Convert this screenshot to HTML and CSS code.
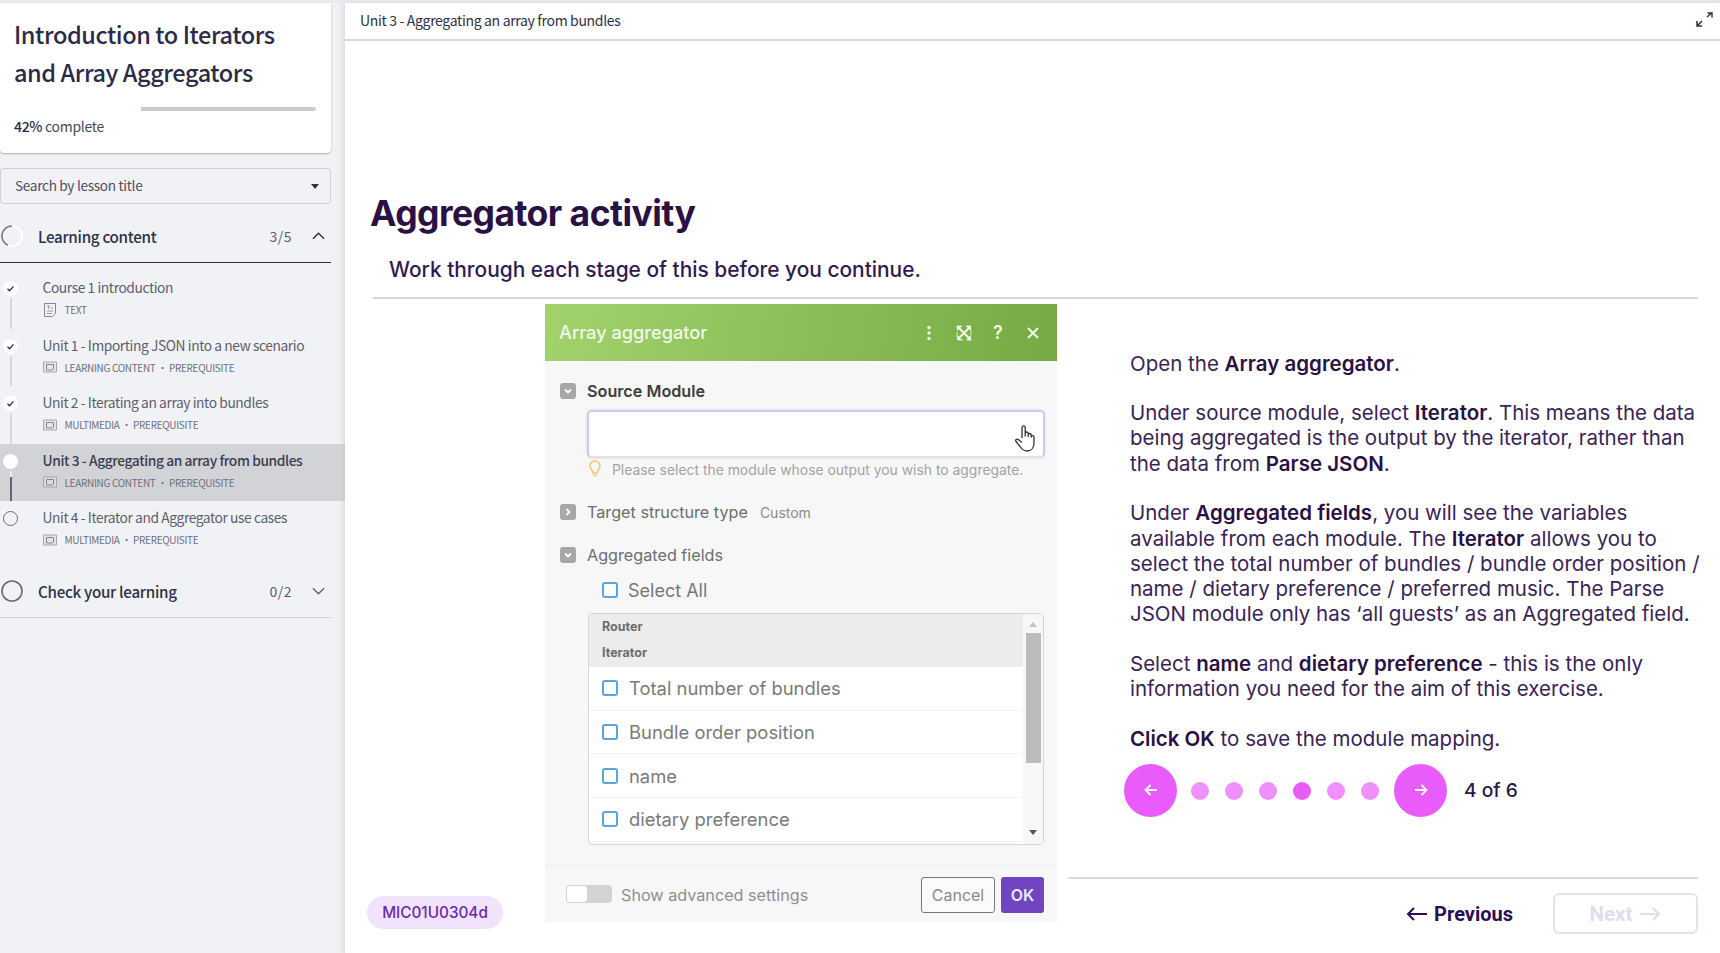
FILE: index.html
```html
<!DOCTYPE html>
<html lang="en">
<head>
<meta charset="utf-8">
<title>Aggregator activity</title>
<link rel="stylesheet" href="styles.css">
</head>
<body>
<div class="app">
  <aside class="sidebar">
    <section class="course-card">
      <h2 class="course-title">Introduction to Iterators and Array Aggregators</h2>
      <div class="progress"><div class="progress-done"></div><div class="progress-rest"></div></div>
      <p class="progress-text"><span class="pct">42%</span> complete</p>
    </section>
    <div class="search"><span class="search-text">Search by lesson title</span><i class="caret"></i></div>

    <div class="section-head open">
      <svg class="ring" viewBox="0 0 22 22"><circle cx="11" cy="11" r="10" fill="none" stroke="#fff" stroke-width="1.6"/><path d="M7 20.2A10 10 0 0 1 11 1" fill="none" stroke="#74757f" stroke-width="1.6"/></svg>
      <span class="section-name">Learning content</span>
      <span class="section-count">3/5</span>
      <svg class="chev" viewBox="0 0 14 8"><path d="M1 7l6-6 6 6" fill="none" stroke="#2f3047" stroke-width="1.5"/></svg>
    </div>
    <ul class="lessons">
      <li class="lesson">
        <div class="rail"><span class="node done"><svg viewBox="0 0 15 15"><path d="M4.5 7.8l2 2 4-4.4" fill="none" stroke="#2f3047" stroke-width="1.3"/></svg></span><span class="link"></span></div>
        <div class="lesson-body"><div class="lesson-title">Course 1 introduction</div>
          <div class="lesson-meta"><svg class="meta-icon" viewBox="0 0 12 14"><path d="M.5.5h11v10l-3 3H.5z" fill="none" stroke="#85868f"/><path d="M3 3h3M4.5 3v3M6.5 5h2.500M3 8h6M3 10.500h5" stroke="#85868f" fill="none" stroke-width=".8"/></svg><span>TEXT</span></div></div>
      </li>
      <li class="lesson">
        <div class="rail"><span class="node done"><svg viewBox="0 0 15 15"><path d="M4.5 7.800l2 2 4-4.400" fill="none" stroke="#2f3047" stroke-width="1.3"/></svg></span><span class="link"></span></div>
        <div class="lesson-body"><div class="lesson-title">Unit 1 - Importing JSON into a new scenario</div>
          <div class="lesson-meta"><svg class="meta-icon" viewBox="0 0 14 11"><path d="M.5.500h13v10H.5z" fill="#e4e5e9" stroke="#a6a7ae"/><path d="M3.500 3h7v4.500l-1 1h-6z" fill="none" stroke="#85868f"/></svg><span>LEARNING CONTENT · PREREQUISITE</span></div></div>
      </li>
      <li class="lesson">
        <div class="rail"><span class="node done"><svg viewBox="0 0 15 15"><path d="M4.500 7.800l2 2 4-4.400" fill="none" stroke="#2f3047" stroke-width="1.3"/></svg></span><span class="link"></span></div>
        <div class="lesson-body"><div class="lesson-title">Unit 2 - Iterating an array into bundles</div>
          <div class="lesson-meta"><svg class="meta-icon" viewBox="0 0 14 11"><path d="M.5.500h13v10H.5z" fill="#e4e5e9" stroke="#a6a7ae"/><path d="M3.500 3h7v4.500l-1 1h-6z" fill="none" stroke="#85868f"/></svg><span>MULTIMEDIA · PREREQUISITE</span></div></div>
      </li>
      <li class="lesson current">
        <div class="rail"><span class="node active"></span><span class="link link-dark"></span></div>
        <div class="lesson-body"><div class="lesson-title">Unit 3 - Aggregating an array from bundles</div>
          <div class="lesson-meta"><svg class="meta-icon" viewBox="0 0 14 11"><path d="M.5.500h13v10H.5z" fill="#dcdde1" stroke="#a6a7ae"/><path d="M3.500 3h7v4.500l-1 1h-6z" fill="none" stroke="#85868f"/></svg><span>LEARNING CONTENT · PREREQUISITE</span></div></div>
      </li>
      <li class="lesson">
        <div class="rail"><span class="node todo"></span></div>
        <div class="lesson-body"><div class="lesson-title">Unit 4 - Iterator and Aggregator use cases</div>
          <div class="lesson-meta"><svg class="meta-icon" viewBox="0 0 14 11"><path d="M.5.500h13v10H.5z" fill="#e4e5e9" stroke="#a6a7ae"/><path d="M3.500 3h7v4.500l-1 1h-6z" fill="none" stroke="#85868f"/></svg><span>MULTIMEDIA · PREREQUISITE</span></div></div>
      </li>
    </ul>
    <div class="section-head closed">
      <svg class="ring" viewBox="0 0 22 22"><circle cx="11" cy="11" r="10" fill="none" stroke="#686977" stroke-width="1.6"/></svg>
      <span class="section-name">Check your learning</span>
      <span class="section-count">0/2</span>
      <svg class="chev" viewBox="0 0 14 8"><path d="M1 1l6 6 6-6" fill="none" stroke="#5d5e6c" stroke-width="1.300"/></svg>
    </div>
  </aside>

  <main class="main">
    <header class="topbar">
      <span class="topbar-title">Unit 3 - Aggregating an array from bundles</span>
      <svg class="expand" viewBox="0 0 17 15"><path d="M1.500 13.500l4.500-4.500M11 5l4.500-4M11.500 1H16v4.500M1 9v5h5" fill="none" stroke="#2f3047" stroke-width="1.500"/></svg>
    </header>
    <h1 class="page-title">Aggregator activity</h1>
    <p class="page-sub">Work through each stage of this before you continue.</p>
    <div class="rule"></div>

    <div class="content">
      <div class="left-col"><span class="badge">MIC01U0304d</span></div>

      <div class="panel">
        <div class="panel-head">
          <span class="panel-title">Array aggregator</span>
          <svg class="head-icon dots" viewBox="0 0 6 16"><circle cx="3" cy="2.500" r="1.700"/><circle cx="3" cy="8" r="1.700"/><circle cx="3" cy="13.500" r="1.700"/></svg>
          <svg class="head-icon full" viewBox="0 0 16 16"><path d="M1 1h5L1 6zM15 1v5l-5-5zM1 15v-5l5 5zM15 15h-5l5-5z"/><path d="M1 1h14v14H1z" fill="none" stroke="#f2f7ea" stroke-width=".8" stroke-dasharray="5 4"/><path d="M3 3l10 10M13 3L3 13" stroke="#f2f7ea" stroke-width="2"/></svg>
          <span class="head-q">?</span>
          <svg class="head-icon close" viewBox="0 0 12 12"><path d="M1 1l10 10M11 1L1 11" stroke="#f2f7ea" stroke-width="2" fill="none"/></svg>
        </div>

        <div class="field-row first">
          <span class="fold"><svg viewBox="0 0 16 16"><path d="M5 6.500l3 3 3-3" fill="none" stroke="#fff" stroke-width="1.800"/></svg></span>
          <strong class="field-strong">Source Module</strong>
        </div>
        <div class="select-box">
          <svg class="hand" viewBox="0 0 22 28"><path d="M8 14V3.500a1.600 1.600 0 0 1 3.200 0V12l0-2.500a1.500 1.500 0 0 1 3 0V12.500l0-1.500a1.500 1.500 0 0 1 3 0V13a1.400 1.400 0 0 1 2.800 0v6c0 4.500-2.500 8-7 8-3.500 0-5-1.500-7-4.500L2 17.500c-1-1.800 1.200-3.200 2.600-1.800L8 18.500" fill="#fff" stroke="#333" stroke-width="1.300" stroke-linejoin="round"/></svg>
        </div>
        <div class="hint">
          <svg class="bulb" viewBox="0 0 12 17"><path d="M6 1a5 5 0 0 0-5 5c0 2.500 2.500 4 3 7h4c.5-3 3-4.500 3-7a5 5 0 0 0-5-5zM4.500 15.500h3" fill="none" stroke="#f5c860" stroke-width="1.500"/></svg>
          <span>Please select the module whose output you wish to aggregate.</span>
        </div>
        <div class="field-row gap22">
          <span class="fold"><svg viewBox="0 0 16 16"><path d="M6.500 5l3 3-3 3" fill="none" stroke="#fff" stroke-width="1.800"/></svg></span>
          <span class="field-label">Target structure type</span><span class="field-note">Custom</span>
        </div>
        <div class="field-row gap23">
          <span class="fold"><svg viewBox="0 0 16 16"><path d="M5 6.500l3 3 3-3" fill="none" stroke="#fff" stroke-width="1.800"/></svg></span>
          <span class="field-label">Aggregated fields</span>
        </div>
        <label class="select-all"><span class="check"></span><span>Select All</span></label>

        <div class="list">
          <div class="list-main">
            <div class="list-group"><div>Router</div><div>Iterator</div></div>
            <div class="list-row"><span class="check"></span><span>Total number of bundles</span></div>
            <div class="list-row"><span class="check"></span><span>Bundle order position</span></div>
            <div class="list-row"><span class="check"></span><span>name</span></div>
            <div class="list-row"><span class="check"></span><span>dietary preference</span></div>
          </div>
          <div class="scroll"><i class="tri-up"></i><i class="thumb"></i><i class="tri-down"></i></div>
        </div>

        <div class="panel-foot">
          <span class="toggle"><i></i></span>
          <span class="toggle-label">Show advanced settings</span>
          <span class="btn-cancel">Cancel</span>
          <span class="btn-ok">OK</span>
        </div>
      </div>

      <div class="right-col">
        <div class="copy">
          <p>Open the <b>Array aggregator</b>.</p>
          <p>Under source module, select <b>Iterator</b>. This means the data being aggregated is the output by the iterator, rather than the data from <b>Parse JSON</b>.</p>
          <p>Under <b>Aggregated fields</b>, you will see the variables available from each module. The <b>Iterator</b> allows you to select the total number of bundles / bundle order position / name / dietary preference / preferred music. The Parse JSON module only has ‘all guests’ as an Aggregated field.</p>
          <p>Select <b>name</b> and <b>dietary preference</b> - this is the only information you need for the aim of this exercise.</p>
          <p><b>Click OK</b> to save the module mapping.</p>
        </div>
        <div class="stepper">
          <span class="step-btn"><svg viewBox="0 0 16 14"><path d="M14 7H3M7.500 2L2.500 7l5 5" fill="none" stroke="#fff" stroke-width="1.800"/></svg></span>
          <span class="dots-row"><i class="dot"></i><i class="dot"></i><i class="dot"></i><i class="dot on"></i><i class="dot"></i><i class="dot"></i></span>
          <span class="step-btn"><svg viewBox="0 0 16 14"><path d="M2 7h11M8.500 2l5 5-5 5" fill="none" stroke="#fff" stroke-width="1.800"/></svg></span>
          <span class="step-text">4 of 6</span>
        </div>
        <div class="pager">
          <span class="prev"><svg viewBox="0 0 22 14"><path d="M21 7H2M8 1L2 7l6 6" fill="none" stroke="#2a0f55" stroke-width="2"/></svg>Previous</span>
          <span class="next">Next<svg viewBox="0 0 22 14"><path d="M1 7h19M14 1l6 6-6 6" fill="none" stroke="#e2dcec" stroke-width="2"/></svg></span>
        </div>
      </div>
    </div>
  </main>
</div>
</body>
</html>
```
FILE: styles.css
```css
* { box-sizing: border-box; }
html, body { margin: 0; height: 100%; }
body { overflow: hidden; background: #e9ebee; font-family: Inter, "Liberation Sans", sans-serif; color: #2b1748; }
p, h1, h2, ul { margin: 0; padding: 0; }
i { display: block; }

.app { display: flex; height: 953px; padding-top: 3px; }

/* Sidebar */
.sidebar { flex: 0 0 345px; background: #f1f2f5; font-family: "Noto Sans CJK SC", "Noto Sans", sans-serif; color: #2f3047; box-shadow: inset -10px 0 8px -8px rgba(0,0,0,.06); }
.course-card { width: 331px; height: 150px; background: #fff; border-radius: 0 0 4px 4px; box-shadow: 0 1px 2px rgba(0,0,0,.3); padding: 11.500px 14px 0 14px; }
.course-title { font-size: 23.500px; line-height: 38.500px; font-weight: 500; letter-spacing: -.42px; color: #2a2c47; width: 280px; }
.progress { display: flex; height: 4px; margin-top: 15px; margin-right: 1px; }
.progress-done { width: 127px; background: #fff; }
.progress-rest { flex: 1; background: #c9cbd6; border-radius: 0 2px 2px 0; }
.progress-text { font-size: 14px; line-height: 20px; letter-spacing: -.3px; margin-top: 5px; color: #474859; }
.pct { font-weight: 500; color: #2a2c47; }

.search { width: 331px; height: 36px; margin-top: 15px; border: 1px solid #d0d1d8; border-radius: 3px; display: flex; align-items: center; justify-content: space-between; padding: 0 11px 0 14px; font-size: 13.600px; letter-spacing: -.3px; color: #4d4e5e; }
.search-text { margin-top: -3px; }
.caret { width: 0; height: 0; border-left: 4.500px solid transparent; border-right: 4.500px solid transparent; border-top: 5px solid #2f3047; }

.section-head { width: 331px; display: flex; align-items: center; padding-left: 1px; }
.section-head.open { height: 53px; margin-top: 6px; border-bottom: 1px solid #2f3047; }
.section-head.closed { height: 51px; margin-top: 8px; padding-bottom: 1px; border-bottom: 1px solid #cfd0d8; }
.ring { width: 22px; height: 22px; flex: none; }
.section-name { margin-left: 15px; font-size: 15.200px; font-weight: 500; letter-spacing: -.3px; color: #2f3047; line-height: 20px; }
.section-count { margin-left: auto; font-size: 14px; color: #5d5e6c; letter-spacing: .5px; }
.chev { width: 13px; height: 8px; margin-left: 20px; margin-right: 6px; flex: none; }

.lessons { list-style: none; margin-top: 8px; }
.lesson { height: 57.500px; display: flex; overflow: hidden; }
.lesson.current { background: #d2d3d7; }
.rail { flex: 0 0 21px; display: flex; flex-direction: column; align-items: center; padding-top: 10px; }
.node { width: 15px; height: 15px; border-radius: 50%; background: #fff; flex: none; display: block; }
.node svg { display: block; width: 15px; height: 15px; }
.node.todo { background: transparent; border: 1px solid #6b6c7a; }
.link { width: 2px; flex: 1; margin-top: 2px; background: #d7d8dd; }
.link-dark { background: linear-gradient(#eceded 0 6px, #62637a 6px); margin-bottom: 0; }
.lesson-body { margin-left: 21.500px; padding-top: 6px; }
.lesson-title { font-size: 13.800px; line-height: 20px; letter-spacing: -.42px; color: #5d5e6c; white-space: nowrap; }
.current .lesson-title { color: #3c3d52; font-weight: 500; }
.lesson-meta { display: flex; align-items: center; margin-top: 5px; height: 15px; font-size: 10px; letter-spacing: -.32px; color: #6e6f7c; white-space: nowrap; }
.meta-icon { width: 14px; height: 14px; margin-right: 8px; flex: none; }

/* Main */
.main { flex: 1; min-width: 0; background: #fff; box-shadow: 0 0 6px rgba(0,0,0,.08); display: flex; flex-direction: column; }
.topbar { height: 38px; flex: none; border-bottom: 2px solid #d7d8de; display: flex; align-items: center; justify-content: space-between; padding: 0 7px 0 15px; }
.topbar-title { font-family: "Noto Sans CJK SC", "Noto Sans", sans-serif; font-size: 14px; letter-spacing: -.33px; color: #2f3047; line-height: 20px; margin-bottom: 2px; }
.expand { width: 17px; height: 15px; flex: none; margin-bottom: 4px; }
.page-title { margin: 151px 0 0 25px; font-size: 35.500px; line-height: 44px; font-weight: 700; letter-spacing: -.55px; color: #2b1043; white-space: nowrap; }
.page-sub { margin: 19px 0 0 44px; font-size: 20.900px; line-height: 30px; font-weight: 500; color: #2f1a50; white-space: nowrap; }
.rule { height: 2px; flex: none; margin: 12px 22px 0 28px; background: #d8d4d8; }

.content { flex: 1; display: flex; min-height: 0; }
.left-col { flex: 0 0 200px; display: flex; align-items: flex-end; padding: 0 0 24px 22px; }
.badge { width: 136px; height: 33px; border-radius: 17px; background: #f0e3fb; color: #6b2aa6; font-size: 15.300px; font-weight: 500; display: flex; align-items: center; justify-content: center; }

/* Panel picture */
.panel { flex: 0 0 512px; height: 618px; margin-top: 5px; background: #f7f7f7; color: #6e6e6e; }
.panel-head { height: 57px; background: linear-gradient(100deg, #a2d26c, #75aa42); display: flex; align-items: center; padding: 0 18px 0 14px; color: #f2f7ea; }
.panel-title { font-size: 18.200px; font-weight: 500; margin-right: auto; margin-bottom: 1px; }
.head-icon { fill: #f2f7ea; flex: none; }
.dots { width: 6px; height: 16px; margin-right: 1px; }
.full { width: 16px; height: 16px; margin-left: 23px; }
.head-q { font-size: 18px; font-weight: 600; margin-left: 21px; width: 11px; }
.close { width: 12px; height: 12px; margin-left: 23px; }

.field-row { height: 20px; display: flex; align-items: center; padding-left: 15px; font-size: 16.200px; }
.field-row.first { margin-top: 20px; }
.gap22 { margin-top: 22px; }
.gap23 { margin-top: 23px; }
.fold { width: 16px; height: 16px; border-radius: 3px; background: #a7a7a7; flex: none; display: block; }
.fold svg { display: block; width: 16px; height: 16px; }
.field-strong { margin-left: 11px; font-weight: 600; color: #3e3e3e; }
.field-label { margin-left: 11px; }
.field-note { margin-left: 12px; font-size: 14px; color: #8b8b8b; }
.select-box { position: relative; width: 458px; height: 48px; margin: 9px 0 0 42px; background: #fff; border: 2px solid #d6c8ec; border-bottom-color: #e1e1e1; border-radius: 5px; box-shadow: 0 0 2px rgba(120,80,200,.3); }
.hand { position: absolute; right: 7px; top: 12px; width: 22px; height: 28px; }
.hint { height: 20px; margin-top: 2px; display: flex; align-items: center; padding-left: 44px; font-size: 13.900px; color: #a3a3a3; white-space: nowrap; }
.bulb { width: 12px; height: 17px; margin-right: 11px; flex: none; margin-top: -4px; }

.select-all { height: 20px; margin-top: 15px; display: flex; align-items: center; padding-left: 57px; font-size: 18px; color: #777; gap: 10px; }
.check { width: 16px; height: 16px; flex: none; background: #fff; border: 2px solid #5ba6d8; border-radius: 3px; display: block; }

.list { width: 456px; height: 232px; margin: 13px 0 0 43px; border: 1px solid #d6d6d6; border-radius: 4px; display: flex; overflow: hidden; background: #fff; }
.list-main { flex: 1; min-width: 0; }
.list-group { height: 53px; background: #ececec; padding-left: 13px; font-size: 12.500px; line-height: 26px; font-weight: 700; color: #6c6c6c; }
.list-row { height: 43.700px; border-bottom: 1px solid #f2f2f2; display: flex; align-items: center; padding-left: 13px; gap: 11px; font-size: 18.400px; color: #7a7a7a; white-space: nowrap; }
.scroll { flex: 0 0 20px; background: #f7f7f7; display: flex; flex-direction: column; align-items: center; }
.thumb { width: 15px; height: 130px; margin-top: 6px; background: #bcbcbc; }
.tri-up { width: 0; height: 0; margin-top: 8px; border-left: 4px solid transparent; border-right: 4px solid transparent; border-bottom: 5px solid #c2c2c2; }
.tri-down { width: 0; height: 0; margin-top: auto; margin-bottom: 9px; border-left: 4px solid transparent; border-right: 4px solid transparent; border-top: 5px solid #555; }

.panel-foot { margin-top: 20px; height: 58px; border-top: 1px solid #efefef; display: flex; align-items: flex-start; padding: 11px 13px 0 21px; }
.toggle { width: 46px; height: 18px; margin-top: 8px; border-radius: 4px; background: #d3d3d3; display: block; padding: 1px; }
.toggle i { width: 20px; height: 16px; background: #fff; border-radius: 3px; }
.toggle-label { margin: 8px 0 0 9px; font-size: 16.200px; line-height: 20px; color: #8f8f8f; white-space: nowrap; }
.btn-cancel { margin-left: auto; width: 74px; height: 36px; border: 1px solid #777; border-radius: 3px; background: #fbfbfb; display: flex; align-items: center; justify-content: center; font-size: 16px; color: #8a8a8a; }
.btn-ok { margin-left: 6px; width: 43px; height: 36px; border-radius: 3px; background: #7045bf; color: #eee6f8; display: flex; align-items: center; justify-content: center; font-size: 16px; font-weight: 600; }

/* Right column */
.right-col { flex: 1; min-width: 0; padding: 0 22px 0 11px; display: flex; flex-direction: column; }
.copy { padding-top: 51.500px; margin: 0 -12px 0 62px; font-size: 20.500px; line-height: 25.200px; color: #3a2355; }
.copy p { margin-bottom: 24.500px; }
.copy p:last-child { margin-bottom: 0; }
.copy b { font-weight: 600; color: #2b1043; }
.stepper { display: flex; align-items: center; margin: 13px 0 0 56px; height: 53px; }
.step-btn { width: 53px; height: 53px; border-radius: 50%; background: #e95cfb; display: flex; align-items: center; justify-content: center; flex: none; }
.step-btn svg { width: 16px; height: 14px; }
.dots-row { display: flex; gap: 16px; margin: 2px 15px 0 14px; }
.dot { width: 18px; height: 18px; border-radius: 50%; background: #f090fb; }
.dot.on { background: #e95cfb; }
.step-text { margin-left: 17px; font-size: 19.200px; font-weight: 500; color: #2b1748; }
.pager { margin-top: 60.500px; border-top: 2px solid #ddd8dd; padding-top: 14px; display: flex; justify-content: flex-end; align-items: flex-start; }
.prev { height: 41px; display: flex; align-items: center; gap: 6px; font-family: Roboto, Inter, sans-serif; font-size: 20px; font-weight: 700; color: #2a0f55; }
.prev svg { width: 22px; height: 14px; }
.next { width: 145px; height: 41px; margin-left: 40px; border: 2px solid #e6e1ee; border-radius: 6px; display: flex; align-items: center; justify-content: center; gap: 7px; font-family: Roboto, Inter, sans-serif; font-size: 20.500px; font-weight: 700; color: #e2dcec; }
.next svg { width: 22px; height: 14px; }
```
